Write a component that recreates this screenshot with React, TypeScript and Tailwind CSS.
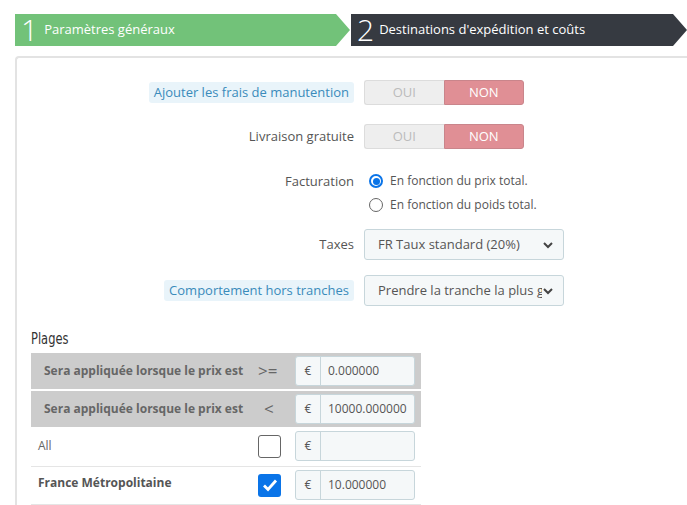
import React from "react";

const font = { fontFamily: '"Open Sans", "Liberation Sans", sans-serif' };

const Switch = () => (
  <div className="flex h-[25px] w-[160px] text-[13px]">
    <div className="flex flex-1 items-center justify-center rounded-l-[3px] border border-r-0 border-[#dcdcdc] bg-[#eeeeee] text-[#bbbbbb]">
      OUI
    </div>
    <div className="flex flex-1 items-center justify-center rounded-r-[3px] border border-[#c9858b] bg-[#e08f95] text-white">
      NON
    </div>
  </div>
);

const Select = ({ value }: { value: string }) => (
  <div className="flex h-[31px] w-[200px] items-center rounded-[3px] border border-[#c7d6db] bg-[#f5f8f9] pl-[13px] pr-[9px] text-[13px] text-[#555]">
    <span className="min-w-0 flex-1 overflow-hidden whitespace-nowrap pr-[8px]">{value}</span>
    <svg width="12" height="12" viewBox="0 0 12 12" className="shrink-0">
      <path d="M2 4l4 4 4-4" fill="none" stroke="#444" strokeWidth="2" />
    </svg>
  </div>
);

const Radio = ({ checked, label }: { checked: boolean; label: string }) => (
  <div className="flex h-[24px] items-center gap-[7px]">
    {checked ? (
      <span className="flex h-[14px] w-[14px] items-center justify-center rounded-full border-2 border-[#0a74e8] bg-white">
        <span className="h-[7px] w-[7px] rounded-full bg-[#0a74e8]" />
      </span>
    ) : (
      <span className="h-[14px] w-[14px] rounded-full border border-[#666] bg-white" />
    )}
    <span className="text-[12px] text-[#555]">{label}</span>
  </div>
);

const Row = ({ label, tip, children, className = "" }: { label: string; tip?: boolean; children: React.ReactNode; className?: string }) => (
  <div className={`flex items-center ${className}`}>
    <div className="flex w-[347px] justify-end pr-[10px]">
      {tip ? (
        <span className="rounded-[3px] bg-[#e9f4fa] px-[5px] py-[1px] text-[13px] text-[#3a8bbb]">{label}</span>
      ) : (
        <span className="text-[13px] text-[#555]">{label}</span>
      )}
    </div>
    {children}
  </div>
);

const Euro = ({ value }: { value: string }) => (
  <div className="flex h-[30px] w-[120px] rounded-[3px] border border-[#c7d6db] bg-[#f5f8f9] text-[12px] text-[#555]">
    <span className="flex w-[25px] items-center justify-center border-r border-[#c7d6db]">€</span>
    <span className="flex flex-1 items-center overflow-hidden whitespace-nowrap pl-[7px]">{value}</span>
  </div>
);

export default function App() {
  return (
    <div className="h-[505px] w-[687px] overflow-hidden bg-white" style={font}>
      <div className="flex pt-[14px]">
        <div className="ml-[15px] flex h-[32px] w-[335px] items-center bg-[#72c279] pl-[6px] text-white [clip-path:polygon(0_0,321px_0,335px_50%,321px_100%,0_100%)]">
          <span className="text-[30px] font-light leading-none">1</span>
          <span className="ml-[6px] text-[13px]">Paramètres généraux</span>
        </div>
        <div className="ml-[1px] flex h-[32px] w-[336px] items-center bg-[#363a41] pl-[6px] text-white [clip-path:polygon(0_0,322px_0,336px_50%,322px_100%,0_100%)]">
          <span className="text-[30px] font-light leading-none">2</span>
          <span className="ml-[5px] text-[13px]">Destinations d'expédition et coûts</span>
        </div>
      </div>

      <div className="ml-[15px] mt-[10px] h-[460px] rounded-tl-[4px] border-l-2 border-t-2 border-[#e3e3e3] pt-[22px]">
        <Row label="Ajouter les frais de manutention" tip>
          <Switch />
        </Row>
        <Row label="Livraison gratuite" className="mt-[19px]">
          <Switch />
        </Row>
        <div className="mt-[20px] flex">
          <div className="flex w-[347px] justify-end pr-[10px] pt-[3px] text-[13px] text-[#555]">Facturation</div>
          <div className="-ml-[1px] pl-[6px]">
            <Radio checked label="En fonction du prix total." />
            <Radio checked={false} label="En fonction du poids total." />
          </div>
        </div>
        <Row label="Taxes" className="mt-[12px]">
          <Select value="FR Taux standard (20%)" />
        </Row>
        <Row label="Comportement hors tranches" tip className="mt-[15px]">
          <Select value="Prendre la tranche la plus grande" />
        </Row>

        <div className="ml-[14px] mt-[22px] w-[390px]">
          <div
            className="text-[15px] text-[#333]"
            style={{ fontFamily: '"DejaVu Sans Condensed", "Liberation Sans Narrow", sans-serif', transform: "scaleX(0.85)", transformOrigin: "left" }}
          >
            Plages
          </div>
          <div className="mt-[2px] flex h-[36px] items-center bg-[#cccccc]">
            <span className="w-[225px] pl-[13px] text-[12px] font-bold text-[#666]">Sera appliquée lorsque le prix est</span>
            <span className="w-[39px] pl-[2px] text-[17px] text-[#666]">&gt;=</span>
            <Euro value="0.000000" />
          </div>
          <div className="mt-[2px] flex h-[36px] items-center bg-[#cccccc]">
            <span className="w-[225px] pl-[13px] text-[12px] font-bold text-[#666]">Sera appliquée lorsque le prix est</span>
            <span className="w-[39px] pl-[8px] text-[17px] text-[#666]">&lt;</span>
            <Euro value="10000.000000" />
          </div>
          <div className="flex h-[40px] items-center border-b border-[#e5e5e5]">
            <span className="w-[225px] pl-[7px] text-[12px] text-[#666]">All</span>
            <div className="flex w-[39px] pl-[2px]">
              <span className="h-[23px] w-[23px] rounded-[3px] border border-[#666] bg-white" />
            </div>
            <Euro value="" />
          </div>
          <div className="flex h-[38px] items-center border-b border-[#e5e5e5]">
            <span className="-mt-[4px] w-[225px] pl-[7px] text-[12px] font-bold text-[#555]">France Métropolitaine</span>
            <div className="flex w-[39px] pl-[2px]">
              <span className="flex h-[23px] w-[23px] items-center justify-center rounded-[3px] bg-[#0a74e8]">
                <svg width="16" height="14" viewBox="0 0 16 14">
                  <path d="M2 7.5l4 4 8-9" fill="none" stroke="white" strokeWidth="2.8" />
                </svg>
              </span>
            </div>
            <Euro value="10.000000" />
          </div>
        </div>
      </div>
    </div>
  );
}
